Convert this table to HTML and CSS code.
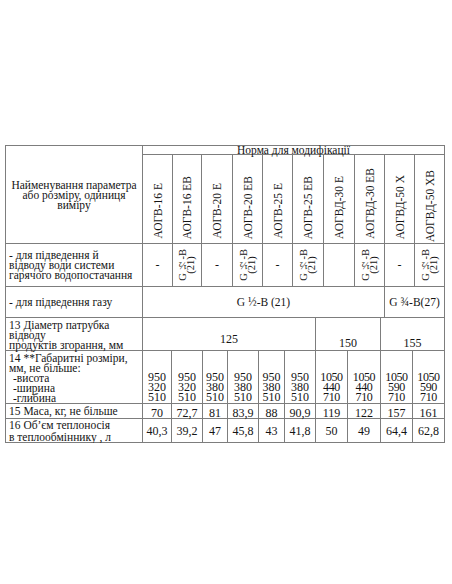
FILE: index.html
```html
<!DOCTYPE html>
<html lang="uk">
<head>
<meta charset="utf-8">
<title>Технічні характеристики</title>
<link rel="stylesheet" href="styles.css">
</head>
<body>
<div class="page">
  <div class="spec">
    <div class="row head">
      <div class="cell label center"><div class="txt">Найменування параметра<br>або розміру, одиниця<br>виміру</div></div>
      <div class="head-right">
        <div class="cell norm">Норма для модифікації</div>
        <div class="models cols-a">
          <div class="cell model"><span class="vert">АОГВ-16 Е</span></div>
          <div class="cell model"><span class="vert">АОГВ-16 ЕВ</span></div>
          <div class="cell model"><span class="vert">АОГВ-20 Е</span></div>
          <div class="cell model"><span class="vert">АОГВ-20 ЕВ</span></div>
          <div class="cell model"><span class="vert">АОГВ-25 Е</span></div>
          <div class="cell model"><span class="vert">АОГВ-25 ЕВ</span></div>
          <div class="cell model"><span class="vert">АОГВД-30 Е</span></div>
          <div class="cell model"><span class="vert">АОГВД-30 ЕВ</span></div>
          <div class="cell model"><span class="vert">АОГВД-50 Х</span></div>
          <div class="cell model model-long"><span class="vert">АОГВД-50 ХВ</span></div>
        </div>
      </div>
    </div>

    <div class="row water cols-a-full">
      <div class="cell label"><div class="txt">- для підведення й<br>відводу води системи<br>гарячого водопостачання</div></div>
      <div class="cell mid">-</div>
      <div class="cell mid"><span class="vert small">G ½-B<br>(21)</span></div>
      <div class="cell mid">-</div>
      <div class="cell mid"><span class="vert small">G ½-B<br>(21)</span></div>
      <div class="cell mid">-</div>
      <div class="cell mid"><span class="vert small">G ½-B<br>(21)</span></div>
      <div class="cell mid"></div>
      <div class="cell mid"><span class="vert small">G ½-B<br>(21)</span></div>
      <div class="cell mid">-</div>
      <div class="cell mid"><span class="vert small">G ½-B<br>(21)</span></div>
    </div>

    <div class="row gas">
      <div class="cell label"><div class="txt">- для підведення газу</div></div>
      <div class="cell mid">G ½-B (21)</div>
      <div class="cell mid">G ¾-B(27)</div>
    </div>

    <div class="row diam">
      <div class="cell label top"><div class="txt">13 Діаметр патрубка<br>відводу<br>продуктів згорання, мм</div></div>
      <div class="cell low low-a">125</div>
      <div class="cell low">150</div>
      <div class="cell low">155</div>
    </div>

    <div class="row dims cols-b-full">
      <div class="cell label top"><div class="txt">14 **Габаритні розміри,<br>мм, не більше:<br><span class="ind">-висота</span><br><span class="ind">-ширина</span><br><span class="ind">-глибина</span></div></div>
      <div class="cell num-stack"><div class="stack">950<br>320<br>510</div></div>
      <div class="cell num-stack"><div class="stack">950<br>320<br>510</div></div>
      <div class="cell num-stack"><div class="stack">950<br>380<br>510</div></div>
      <div class="cell num-stack"><div class="stack">950<br>380<br>510</div></div>
      <div class="cell num-stack"><div class="stack">950<br>380<br>510</div></div>
      <div class="cell num-stack"><div class="stack">950<br>380<br>510</div></div>
      <div class="cell num-stack wide"><div class="stack">1050<br>440<br>710</div></div>
      <div class="cell num-stack wide"><div class="stack">1050<br>440<br>710</div></div>
      <div class="cell num-stack wide"><div class="stack">1050<br>590<br>710</div></div>
      <div class="cell num-stack wide"><div class="stack">1050<br>590<br>710</div></div>
    </div>

    <div class="row mass cols-b-full">
      <div class="cell label top"><div class="txt">15 Маса, кг, не більше</div></div>
      <div class="cell num">70</div>
      <div class="cell num">72,7</div>
      <div class="cell num">81</div>
      <div class="cell num">83,9</div>
      <div class="cell num">88</div>
      <div class="cell num">90,9</div>
      <div class="cell num">119</div>
      <div class="cell num">122</div>
      <div class="cell num">157</div>
      <div class="cell num">161</div>
    </div>

    <div class="row vol cols-b-full">
      <div class="cell label vol-label"><div class="txt">16 Об’єм теплоносія<br>в теплообміннику , л</div></div>
      <div class="cell mid">40,3</div>
      <div class="cell mid">39,2</div>
      <div class="cell mid">47</div>
      <div class="cell mid">45,8</div>
      <div class="cell mid">43</div>
      <div class="cell mid">41,8</div>
      <div class="cell mid">50</div>
      <div class="cell mid">49</div>
      <div class="cell mid">64,4</div>
      <div class="cell mid">62,8</div>
    </div>
  </div>
</div>
</body>
</html>
```

FILE: styles.css
```css
* {
  box-sizing: border-box;
}

html, body {
  margin: 0;
  padding: 0;
  background: #ffffff;
}

body {
  font-family: "Liberation Serif", "Times New Roman", serif;
  font-size: 12px;
  line-height: 10px;
  color: #141414;
}

.page {
  padding: 145px 0 0 5px;
}

.spec {
  width: 440px;
  border-top: 1px solid #7d7d7d;
  border-left: 1px solid #7d7d7d;
}

.cell {
  border-right: 1px solid #7d7d7d;
  border-bottom: 1px solid #7d7d7d;
  overflow: visible;
  white-space: nowrap;
  min-width: 0;
  min-height: 0;
}

.row {
  display: grid;
}

/* column sets */
.head {
  grid-template-columns: 137px 302px;
  height: 98px;
}

.cols-a {
  display: grid;
  grid-template-columns: 30px 29px 31px 30px 30px 31px 31px 30px 30px 30px;
}

.cols-a-full {
  grid-template-columns: 137px 30px 29px 31px 30px 30px 31px 31px 30px 30px 30px;
}

.cols-b-full {
  grid-template-columns: 137px 29px 31px 25px 31px 26px 31px 32px 33px 32px 32px;
}

/* labels */
.label {
  padding-left: 3px;
  display: flex;
  flex-direction: column;
  justify-content: center;
  font-size: 11.5px;
}

.label.center {
  align-items: center;
  text-align: center;
  padding-left: 0;
}

.label.top {
  justify-content: flex-start;
  padding-top: 2px;
}

/* header */
.head-right {
  display: flex;
  flex-direction: column;
}

.norm {
  height: 9px;
  line-height: 9px;
  text-align: center;
  font-size: 11.5px;
}

.models {
  flex: 1;
}

.model {
  display: flex;
  align-items: flex-end;
  justify-content: center;
  padding-bottom: 4px;
  font-size: 11.5px;
}

.model-long {
  padding-bottom: 1px;
}

.vert {
  writing-mode: vertical-rl;
  transform: rotate(180deg);
  line-height: 12px;
  white-space: nowrap;
}

.vert.small {
  font-size: 10.5px;
  line-height: 8px;
  text-align: center;
}

/* rows */
.water {
  height: 43px;
}

.mid {
  display: flex;
  align-items: center;
  justify-content: center;
}

.gas {
  grid-template-columns: 137px 242px 60px;
  height: 31px;
}

.gas .mid {
  font-size: 11.5px;
}

.diam {
  grid-template-columns: 137px 173px 65px 64px;
  height: 33px;
}

.low {
  display: flex;
  align-items: flex-end;
  justify-content: center;
  padding-bottom: 2px;
}

.low-a {
  padding-bottom: 6px;
}

.dims {
  height: 53px;
}

.ind {
  padding-left: 4px;
}

.num-stack {
  display: flex;
  align-items: flex-end;
  justify-content: center;
  padding-bottom: 1px;
}

.stack {
  text-align: center;
}

.num-stack.wide .stack {
  letter-spacing: -0.4px;
}

.mass {
  height: 15px;
}

.num {
  text-align: center;
  padding-top: 4px;
}

.vol {
  height: 24px;
}

.vol-label {
  line-height: 12px;
}
```
